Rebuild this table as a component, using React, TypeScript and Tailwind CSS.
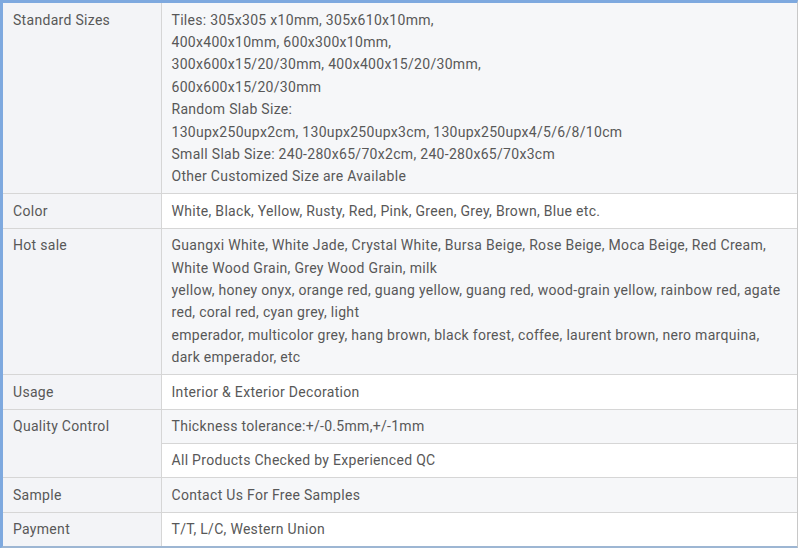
import React from "react";

const L = "border-b border-[#d6d6d6] border-r border-r-[#d6d6d6] bg-[#f3f4f7] pl-[10px] pr-2 py-[5.5px] align-top w-[158px]";
const G = "border-b border-[#d6d6d6] bg-[#f6f7f9] pl-[10px] pr-2 py-[5.5px] align-top";
const W = "border-b border-[#d6d6d6] bg-white pl-[10px] pr-2 py-[5.5px] align-top";

export default function App() {
  return (
    <div className="w-[800px] h-[548px] bg-white overflow-hidden">
      <div
        className="w-[798px] border-t-[3px] border-l-[3px] border-b-[3px] border-r border-t-[#7ea9df] border-l-[#7ea9df] border-b-[#9db6d3] border-r-[#c8c8c8] text-[14px] leading-[22.4px] tracking-[0.3px] text-[#585858]"
        style={{ fontFamily: "Roboto, 'Liberation Sans', sans-serif" }}
      >
        <table className="w-full border-collapse">
          <tbody>
            <tr>
              <td className={L}>Standard Sizes</td>
              <td className={G}>
                Tiles: 305x305 x10mm, 305x610x10mm,
                <br />
                400x400x10mm, 600x300x10mm,
                <br />
                300x600x15/20/30mm, 400x400x15/20/30mm,
                <br />
                600x600x15/20/30mm
                <br />
                Random Slab Size:
                <br />
                130upx250upx2cm, 130upx250upx3cm, 130upx250upx4/5/6/8/10cm
                <br />
                Small Slab Size: 240-280x65/70x2cm, 240-280x65/70x3cm
                <br />
                Other Customized Size are Available
              </td>
            </tr>
            <tr>
              <td className={L}>Color</td>
              <td className={W}>White, Black, Yellow, Rusty, Red, Pink, Green, Grey, Brown, Blue etc.</td>
            </tr>
            <tr>
              <td className={L}>Hot sale</td>
              <td className={G}>
                Guangxi White, White Jade, Crystal White, Bursa Beige, Rose Beige, Moca Beige, Red Cream,
                <br />
                White Wood Grain, Grey Wood Grain, milk
                <br />
                yellow, honey onyx, orange red, guang yellow, guang red, wood-grain yellow, rainbow red, agate
                <br />
                red, coral red, cyan grey, light
                <br />
                emperador, multicolor grey, hang brown, black forest, coffee, laurent brown, nero marquina,
                <br />
                dark emperador, etc
              </td>
            </tr>
            <tr>
              <td className={L}>Usage</td>
              <td className={W}>Interior &amp; Exterior Decoration</td>
            </tr>
            <tr>
              <td className={L} rowSpan={2}>Quality Control</td>
              <td className={G}>Thickness tolerance:+/-0.5mm,+/-1mm</td>
            </tr>
            <tr>
              <td className={W}>All Products Checked by Experienced QC</td>
            </tr>
            <tr>
              <td className={L}>Sample</td>
              <td className={G}>Contact Us For Free Samples</td>
            </tr>
            <tr>
              <td className={L + " border-b-0"}>Payment</td>
              <td className={W + " border-b-0"}>T/T, L/C, Western Union</td>
            </tr>
          </tbody>
        </table>
      </div>
    </div>
  );
}
